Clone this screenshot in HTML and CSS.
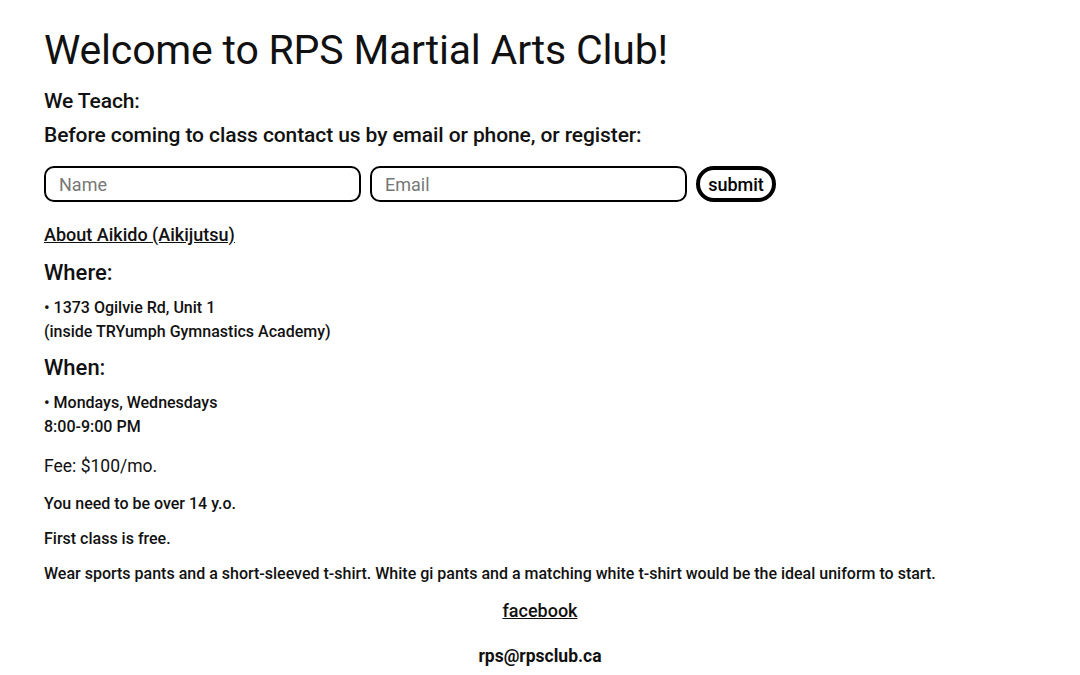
FILE: index.html
```html
<!DOCTYPE html>
<html lang="en">
<head>
  <meta charset="UTF-8" />
  <meta name="viewport" content="width=device-width, initial-scale=1.0"/>
  <title>RPS Martial Arts Club</title>
  <link rel="stylesheet" href="styles.css">
</head>
<body>
  <main class="page">
    <h1>Welcome to RPS Martial Arts Club!</h1>
    <h3 class="teach">We Teach:</h3>
    <h3 class="contact">Before coming to class contact us by email or phone, or register:</h3>

    <form class="register" onsubmit="return false">
      <input type="text" placeholder="Name">
      <input type="email" placeholder="Email">
      <button type="submit" class="submit-btn">submit</button>
    </form>

    <a href="#" class="about-link">About Aikido (Aikijutsu)</a>

    <h2>Where:</h2>
    <p class="info">• 1373 Ogilvie Rd, Unit 1<br>(inside TRYumph Gymnastics Academy)</p>

    <h2>When:</h2>
    <p class="info">• Mondays, Wednesdays<br>8:00-9:00 PM</p>

    <p class="fee">Fee: $100/mo.</p>
    <p class="note">You need to be over 14 y.o.</p>
    <p class="note">First class is free.</p>
    <p class="note">Wear sports pants and a short-sleeved t-shirt. White gi pants and a matching white t-shirt would be the ideal uniform to start.</p>

    <footer class="footer">
      <a href="#" class="fb-link">facebook</a>
      <p class="mail">rps@rpsclub.ca</p>
    </footer>
  </main>
</body>
</html>
```

FILE: styles.css
```css
* {
  box-sizing: border-box;
}

body {
  margin: 0;
  font-family: 'Roboto', 'Liberation Sans', sans-serif;
  color: #111;
  background: #fff;
}

.page {
  padding: 26px 44px 0;
}

h1 {
  font-size: 41px;
  font-weight: 400;
  margin: 0 0 15px;
  letter-spacing: -0.2px;
}

h3 {
  font-size: 21px;
  font-weight: 500;
  margin: 0;
  letter-spacing: -0.1px;
}

.teach {
  margin-bottom: 10px;
}

.contact {
  margin-bottom: 19px;
}

.register {
  display: flex;
  gap: 9px;
  margin-bottom: 22px;
}

.register input {
  width: 317px;
  height: 36px;
  border: 2px solid #000;
  border-radius: 10px;
  padding: 0 13px;
  font-family: inherit;
  font-size: 18px;
}

.register input::placeholder {
  color: #777;
}

.submit-btn {
  width: 80px;
  height: 36px;
  border: 4px solid #000;
  border-radius: 18px;
  background: #fff;
  font-family: inherit;
  font-size: 18px;
  font-weight: 500;
  color: #000;
  padding: 0;
  cursor: pointer;
}

.about-link {
  display: inline-block;
  font-size: 18px;
  font-weight: 500;
  color: #111;
  margin-bottom: 15px;
}

h2 {
  font-size: 22px;
  font-weight: 500;
  margin: 0 0 11px;
}

.info {
  font-size: 16px;
  font-weight: 500;
  line-height: 24px;
  margin: 0 0 11px;
}

.fee {
  font-size: 17.5px;
  margin: 17px 0 18px;
}

.note {
  font-size: 16px;
  font-weight: 500;
  margin: 0 0 16px;
}

.footer {
  text-align: center;
  padding-top: 1px;
}

.fb-link {
  font-size: 18px;
  font-weight: 500;
  color: #111;
}

.mail {
  font-size: 17.5px;
  font-weight: 700;
  margin: 25px 0 0;
}
```
